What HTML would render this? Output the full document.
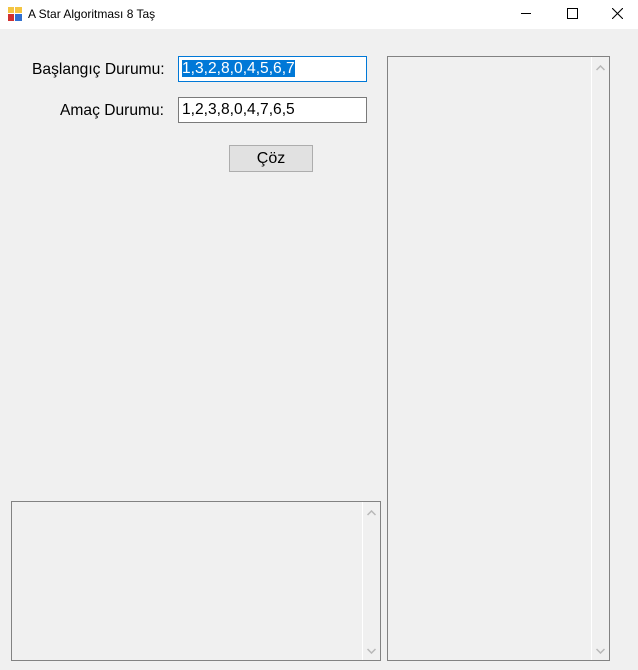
<!DOCTYPE html>
<html><head><style>
body{margin:0;width:638px;height:670px;background:#f0f0f0;position:relative;overflow:hidden;font-family:"Liberation Sans",sans-serif}
.a{position:absolute}
.title{left:0;top:0;width:638px;height:29px;background:#fff}
.lbl{font-size:15.6px;color:#000}
.tb{background:#fff;border:1px solid #7a7a7a;box-sizing:border-box;font-size:15.6px;line-height:20px;padding-left:3px;padding-top:2px}
.box{border:1px solid #828282;box-sizing:border-box;background:#f0f0f0}
.sb{border-left:1px solid #fff;width:17px;top:0;bottom:0;right:0}
</style></head><body>
<div class="a title">
 <svg class="a" style="left:8px;top:7px" width="14" height="14"><rect x="0" y="0" width="6" height="6" fill="#f4c542"/><rect x="7" y="0" width="7" height="6" fill="#f4c542"/><rect x="0" y="7" width="6" height="7" fill="#d03030"/><rect x="7" y="7" width="7" height="7" fill="#3070d0"/></svg>
 <div class="a" style="left:28px;top:7px;font-size:12px">A Star Algoritması 8 Taş</div>
 <div class="a" style="left:521px;top:13px;width:10px;height:1px;background:#000"></div>
 <div class="a" style="left:567px;top:8px;width:9px;height:9px;border:1px solid #000"></div>
 <svg class="a" style="left:612px;top:8px" width="11" height="11"><path d="M0 0L11 11M11 0L0 11" stroke="#000" stroke-width="1.1"/></svg>
</div>
<div class="a lbl" style="left:32px;top:61px">Başlangıç Durumu:</div>
<div class="a lbl" style="left:60px;top:102px">Amaç Durumu:</div>
<div class="a tb" style="left:178px;top:56px;width:189px;height:26px;border-color:#0078d7"><span style="background:#0078d7;color:#fff">1,3,2,8,0,4,5,6,7</span></div>
<div class="a tb" style="left:178px;top:97px;width:189px;height:26px">1,2,3,8,0,4,7,6,5</div>
<div class="a" style="left:229px;top:145px;width:84px;height:27px;box-sizing:border-box;border:1px solid #adadad;background:#e1e1e1;text-align:center;font-size:16px;line-height:25px">Çöz</div>
<div class="a box" style="left:11px;top:501px;width:370px;height:160px"><div class="a sb"><svg class="a" style="left:4px;top:8px" width="9" height="6"><path d="M0.5 5L4.5 1L8.5 5" stroke="#b8b8b8" fill="none" stroke-width="1.5"/></svg><svg class="a" style="left:4px;bottom:6px" width="9" height="6"><path d="M0.5 1L4.5 5L8.5 1" stroke="#b8b8b8" fill="none" stroke-width="1.5"/></svg></div></div>
<div class="a box" style="left:387px;top:56px;width:223px;height:605px"><div class="a sb"><svg class="a" style="left:4px;top:8px" width="9" height="6"><path d="M0.5 5L4.5 1L8.5 5" stroke="#b8b8b8" fill="none" stroke-width="1.5"/></svg><svg class="a" style="left:4px;bottom:6px" width="9" height="6"><path d="M0.5 1L4.5 5L8.5 1" stroke="#b8b8b8" fill="none" stroke-width="1.5"/></svg></div></div>
</body></html>
